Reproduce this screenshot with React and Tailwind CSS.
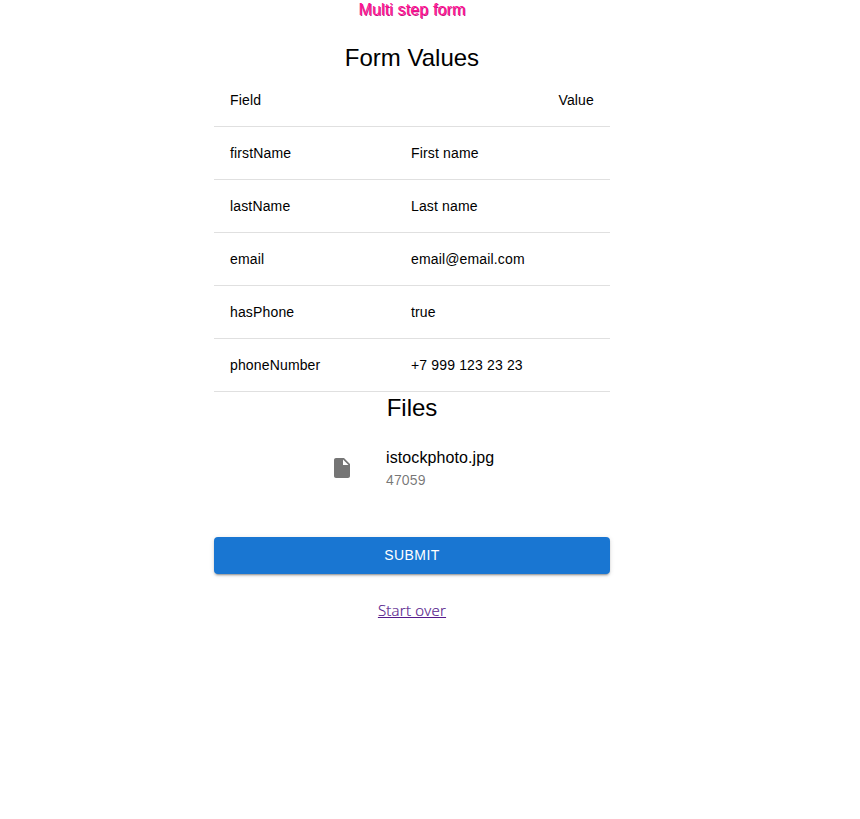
const rows = [
  ['firstName', 'First name'],
  ['lastName', 'Last name'],
  ['email', 'email@email.com'],
  ['hasPhone', 'true'],
  ['phoneNumber', '+7 999 123 23 23'],
];

export default function App() {
  return (
    <div className="flex h-[819px] w-[860px] flex-col bg-white pl-[214px] font-['Liberation_Sans',Arial,sans-serif]">
      <main className="flex w-[396px] flex-col items-center">
        <h1 className="h-10 text-base leading-5 tracking-[0.00938em] text-[#ff1493] [text-shadow:1px_1px_#c71585]">Multi step form</h1>
        <h2 className="h-[34px] text-2xl leading-9 text-black">Form Values</h2>
        <section className="w-full text-sm leading-5 tracking-[0.01071em] text-black">
          <div className="flex h-[53px] justify-between border-b border-[#e0e0e0] px-4 py-4">
            <span>Field</span>
            <span>Value</span>
          </div>
          {rows.map(([k, v]) => (
            <div key={k} className="flex h-[53px] border-b border-[#e0e0e0] px-4 py-4">
              <span className="w-[181px]">{k}</span>
              <span>{v}</span>
            </div>
          ))}
        </section>
        <h2 className="h-8 text-2xl leading-8 text-black">Files</h2>
        <div className="mt-3.5 flex h-[60px] items-center self-start pl-[116px]">
          <svg viewBox="0 0 24 24" className="mr-8 h-6 w-6 fill-[#757575]">
            <path d="M6 2c-1.100 0-1.990.9-1.990 2L4 20c0 1.100.890 2 1.990 2H18c1.100 0 2-.9 2-2V8l-6-6H6zm7 7V3.500L18.500 9H13z" />
          </svg>
          <div>
            <p className="text-base leading-6 tracking-[0.1px] text-black">istockphoto.jpg</p>
            <p className="text-sm leading-5 tracking-[0.01071em] text-black/55">47059</p>
          </div>
        </div>
        <button className="mt-[39px] h-[37px] w-full rounded bg-[#1976d2] pb-0.5 text-sm font-medium tracking-[0.02857em] text-white shadow-[0_3px_1px_-2px_rgba(0,0,0,0.2),0_2px_2px_0_rgba(0,0,0,0.14),0_1px_5px_0_rgba(0,0,0,0.12)]">SUBMIT</button>
        <a href="#" className="mt-6 font-['Open_Sans',sans-serif] text-[15px] leading-[25px] font-light tracking-[0.25px] text-[#551a8b] underline [-webkit-text-stroke:0.2px_#551a8b]">Start over</a>
      </main>
    </div>
  );
}
